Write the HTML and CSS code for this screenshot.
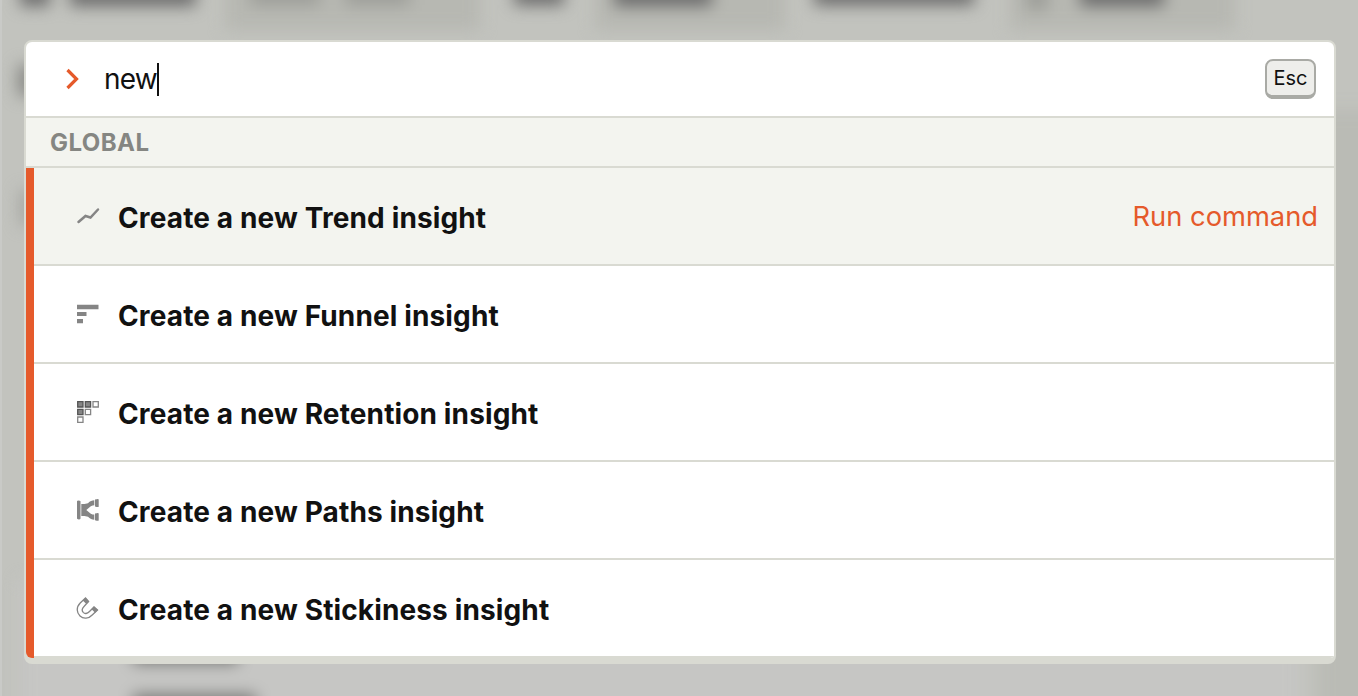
FILE: index.html
```html
<!DOCTYPE html>
<html lang="en">
<head>
<meta charset="utf-8">
<title>Command palette</title>
<link rel="stylesheet" href="styles.css">
</head>
<body>
<svg class="backdrop" viewBox="0 0 1358 696" aria-hidden="true">
  <defs><filter id="soft" x="-50" y="-50" width="1458" height="796" filterUnits="userSpaceOnUse" color-interpolation-filters="sRGB"><feGaussianBlur stdDeviation="8"/></filter></defs>
  <rect width="1358" height="696" fill="#c2c3be"/>
  <g filter="url(#soft)">
    <path d="M225-30H480V30H225ZM595-30H785V30H595ZM1010-30H1235V30H1010Z" fill="#b7b8b2"/>
    <path d="M20-14H50V6H20ZM70-14H196V6H70ZM514-14H564V5H514ZM614-14H712V6H614ZM814-14H974V5H814ZM1080-14H1164V6H1080Z" fill="#6a6a6a"/>
    <path d="M250-14H320V5H250ZM345-14H410V5H345ZM1026-14H1048V10H1026Z" fill="#9c9d98"/>
    <path d="M18 65H36V96H18Z" fill="#888985"/>
    <path d="M20 190H36V225H20Z" fill="#a5a6a1"/>
    <rect x="20" y="580" width="1280" height="150" fill="#c6c6c4"/>
    <path d="M133 640H238V663H133ZM133 695H256V710H133Z" fill="#6f706e"/>
    <rect x="1318" y="110" width="60" height="640" fill="#babbb5"/>
  </g>
  <rect width="2" height="696" fill="#c9cac7"/>
</svg>
<main class="palette">
  <header class="search">
    <svg class="prompt" viewBox="0 0 14 22"><path d="M2.5 2L11.5 11L2.5 20"/></svg>
    <span class="query">new</span><span class="caret"></span>
    <kbd class="key">Esc</kbd>
  </header>
  <h2 class="scope">GLOBAL</h2>
  <ul class="results">
    <li class="result active">
      <svg class="icon" viewBox="0 0 24 24"><path class="line" d="M2.5 18L9.5 12L14.5 13.5L22 5.5"/></svg>
      <span class="label">Create a new Trend insight</span><span class="hint">Run command</span>
    </li>
    <li class="result">
      <svg class="icon" viewBox="0 0 24 24"><path d="M1 2.7H22.5V7.2H1ZM1 10H10.5V14H1ZM1 17H7V21.3H1Z"/></svg>
      <span class="label">Create a new Funnel insight</span>
    </li>
    <li class="result">
      <svg class="icon" viewBox="0 0 24 24"><path class="cell filled" d="M1.7 1.7H7V7H1.7ZM9.3 1.7H14.6V7H9.3ZM1.7 9.3H7V14.6H1.7Z"/><path class="cell" d="M17 1.7H22.3V7H17ZM9.3 9.3H14.6V14.6H9.3ZM1.7 17H7V22.3H1.7Z"/></svg>
      <span class="label">Create a new Retention insight</span>
    </li>
    <li class="result">
      <svg class="icon" viewBox="0 0 24 24"><path d="M1 3.2Q1 2.4 2.5 2.4T4.5 3.2V20.5Q4.5 21.4 2.7 21.4T1 20.5ZM5.3 6H8.5L12 5.2C14 3 16 2.4 18.3 2.3V7.3C16 7.4 14.5 8.2 13 9.8L10.3 12L13 14.2C14.5 15.8 16 16.5 18.3 16.6V21.7C16 21.5 14 21 12 18.8L8.5 18H5.3ZM19 1.5Q22.7 .5 22.7 1.5V8.5Q22.7 9.5 19 8.5ZM19 15.5Q22.7 14.5 22.7 15.5V22.3Q22.7 23.3 19 22.3Z"/></svg>
      <span class="label">Create a new Paths insight</span>
    </li>
    <li class="result">
      <svg class="icon" viewBox="0 0 24 24"><path class="thin" d="M9.5 2L4.2 7C-.2 11.5 .8 17 4 20C7.3 23 12.5 23 16.5 18.7L21.5 14L18 11L13.5 15.5C11 18 8.8 18 7.2 16.4C5.7 14.8 6 12.5 8.2 10.3L12.6 5.5Z"/><path d="M9.5 1.7L13 5.4L10.3 8L6.8 4.5ZM18 10.6L22 14L19.2 16.7L15.5 13.2Z"/></svg>
      <span class="label">Create a new Stickiness insight</span>
    </li>
  </ul>
</main>
</body>
</html>
```

FILE: styles.css
```css
* { box-sizing: border-box; }
body {
  margin: 0;
  width: 1358px;
  height: 696px;
  overflow: hidden;
  padding: 40px 22px 32px 24px;
  font-family: Inter, "Liberation Sans", sans-serif;
  color: #111;
}
.backdrop { position: absolute; top: 0; left: 0; width: 1358px; height: 696px; z-index: -1; }
.palette {
  height: 624px;
  border: 2px solid #d9dad2;
  border-bottom-width: 6px;
  border-radius: 8px;
  background: #d9dad2;
  overflow: hidden;
}
.search {
  display: flex;
  align-items: center;
  height: 76px;
  padding: 0 18px 0 39px;
  background: #fff;
  border-bottom: 2px solid #d9dad2;
}
.prompt { width: 14px; height: 22px; margin-right: 25px; fill: none; stroke: #e55a2b; stroke-width: 3.2; }
.query { font-size: 28px; line-height: 34px; letter-spacing: -0.8px; }
.caret { width: 2px; height: 33px; background: #111; }
.key {
  margin-left: auto;
  width: 51px;
  height: 40px;
  border: 2px solid #a9aaa5;
  border-bottom-width: 4px;
  border-radius: 8px;
  background: #eeeeeb;
  font: 20px/34px Inter, sans-serif;
  text-align: center;
}
.scope {
  margin: 0;
  height: 50px;
  padding-left: 24px;
  border-bottom: 2px solid #d9dad2;
  background: #f3f4ef;
  color: #858682;
  font-size: 24px;
  line-height: 49px;
  font-weight: 700;
  letter-spacing: 0.45px;
}
.results {
  margin: 0;
  padding: 0;
  list-style: none;
  height: 490px;
  border-left: 8px solid #e55a2b;
  border-bottom-left-radius: 6px;
}
.result {
  display: flex;
  align-items: center;
  height: 98px;
  padding: 0 17px 0 42px;
  background: #fff;
  border-bottom: 2px solid #d9dad2;
}
.active { background: #f3f4ef; }
.icon { width: 24px; height: 24px; margin: 0 18px 0 0; fill: #858585; flex: none; }
.line { fill: none; stroke: #858585; stroke-width: 2.5; stroke-linecap: round; }
.cell { fill: none; stroke: #858585; stroke-width: 1.3; }
.filled { fill: #858585; stroke: #555; }
.thin { fill: none; stroke: #858585; stroke-width: 1.3; }
.label { font-size: 28px; line-height: 34px; font-weight: 700; padding-top: 4px; letter-spacing: 0.13px; }
.hint { margin: 1px -1px 0 auto; font-size: 27.3px; line-height: 34px; color: #e55a2b; }
```
